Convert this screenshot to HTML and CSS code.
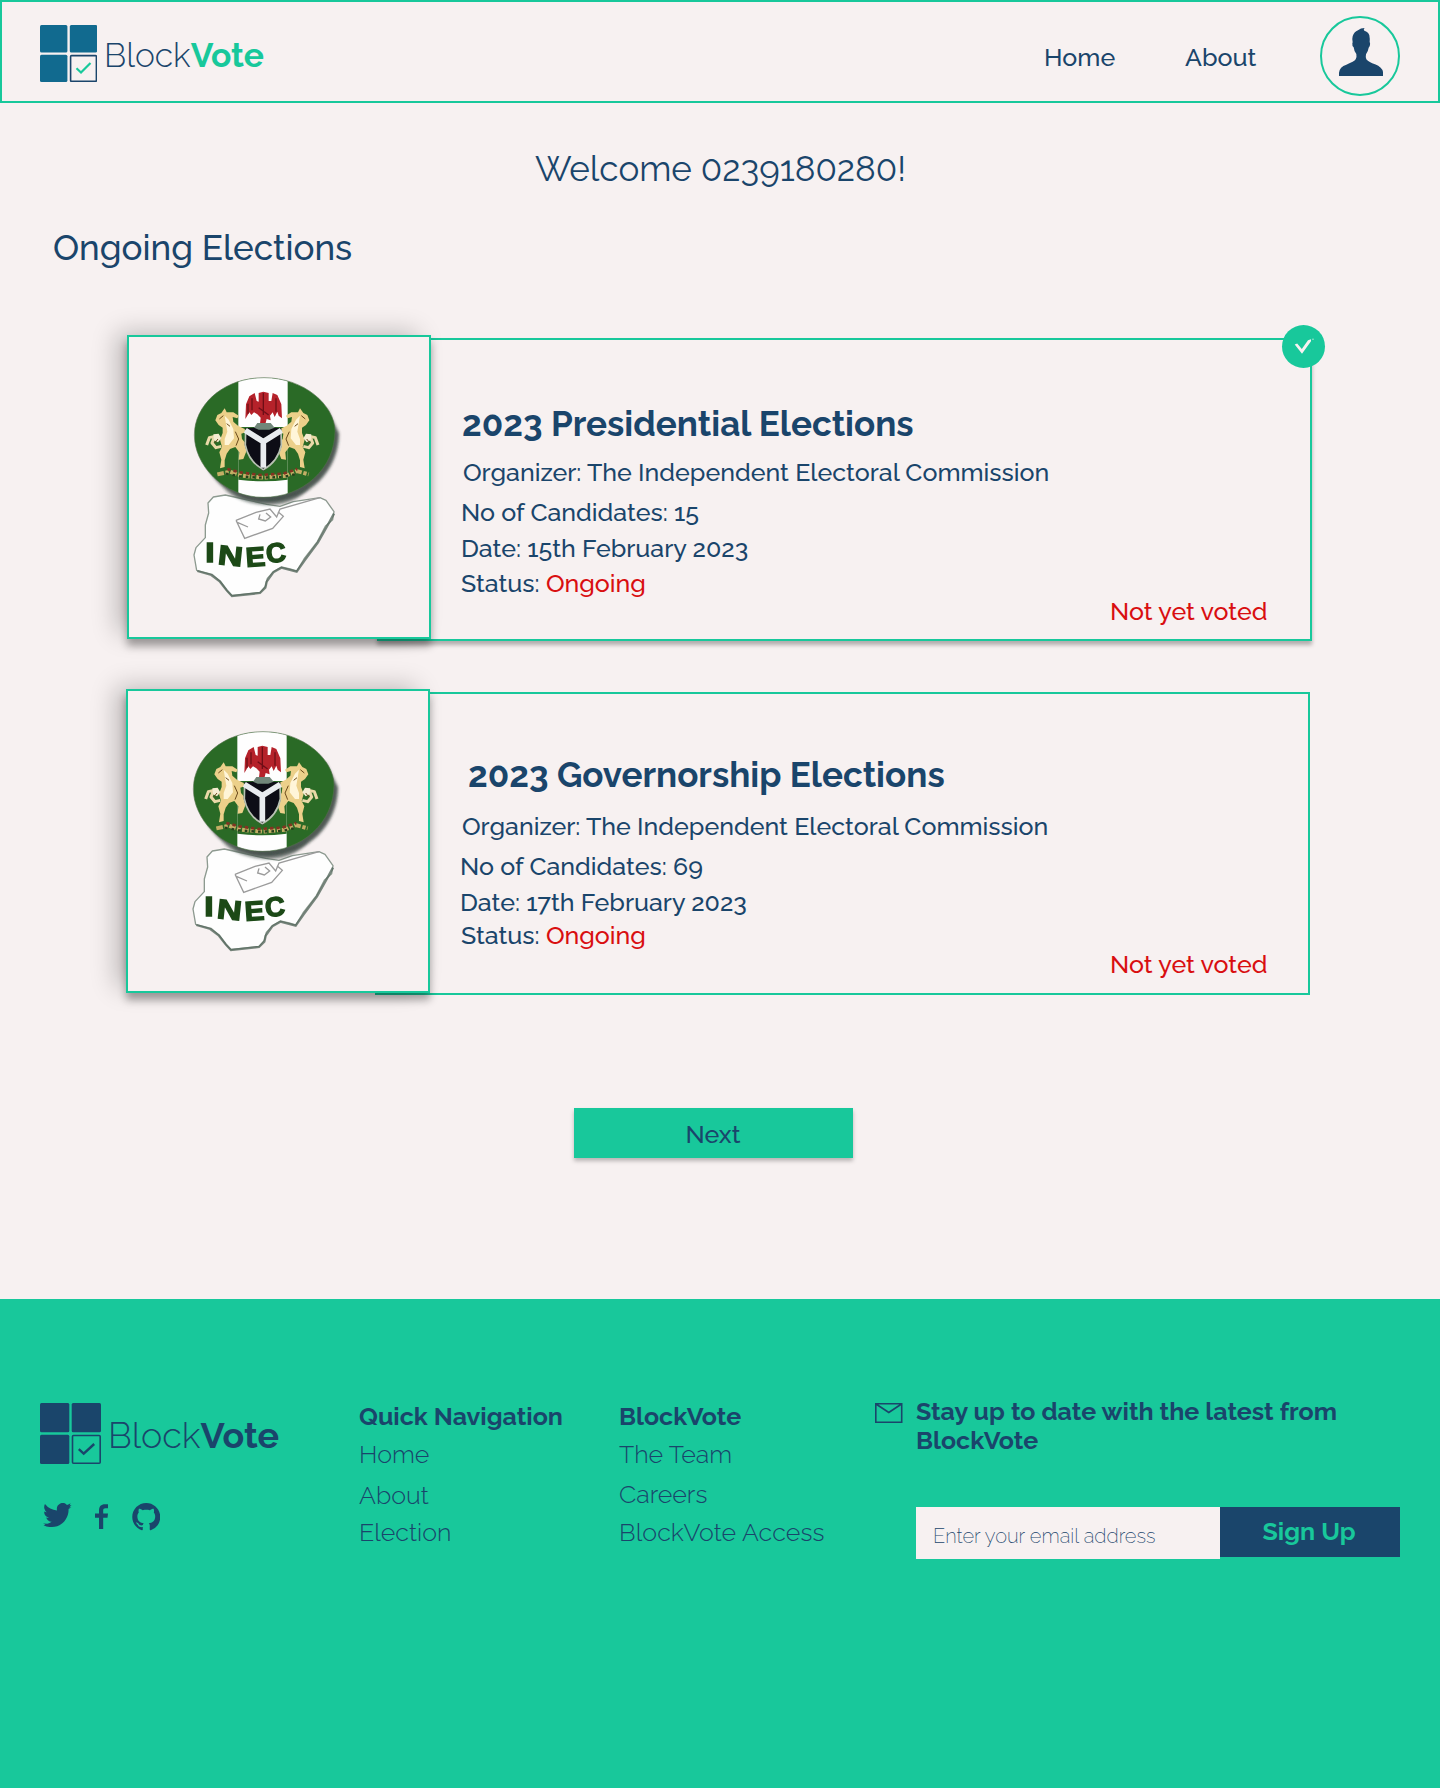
FILE: index.html
```html
<!DOCTYPE html>
<html lang="en">
<head>
<meta charset="utf-8">
<title>BlockVote</title>
<link rel="stylesheet" href="styles.css">
</head>
<body>
<svg class="defs" width="0" height="0" aria-hidden="true">
  <defs>
    <filter id="soft" x="-20%" y="-20%" width="140%" height="140%"><feGaussianBlur stdDeviation="5"/></filter>
    <filter id="print" x="-5%" y="-5%" width="110%" height="110%"><feGaussianBlur stdDeviation="1.6"/></filter>
    <clipPath id="oval"><path d="M43 210 C43 120 130 38 252 38 C372 38 464 120 465 198 C465 310 370 397 250 397 C130 397 43 300 43 210Z"/></clipPath>
    <g id="horse">
      <path fill="#ecd08a" d="M106 166 L112 150 L124 144 L134 130 L140 142 L160 142 L176 152 L172 160 L158 156 L160 170 L174 182 L194 192 L196 202 L184 206 L186 222 L198 236 L198 262 L190 282 L176 284 L178 262 L166 246 L150 252 L140 266 L134 286 L134 306 L120 310 L124 284 L118 262 L126 246 L120 224 L128 204 L128 188 L116 180Z"/>
      <path fill="#fff5d8" d="M134 152 L146 164 L160 192 L162 220 L146 240 L134 240 L134 222 L142 200Z"/>
      <path fill="none" stroke="#ead9a8" stroke-width="9" stroke-linejoin="round" d="M124 244 L108 248 L96 234 L104 214 L88 218 L80 240"/>
      <path fill="#f5ecd2" d="M100 208 L116 206 L124 220 L114 232 L102 226Z"/>
      <path fill="none" stroke="#6b4a1c" stroke-width="3" d="M118 162 L130 152 M166 200 L176 222 L168 242 M104 234 L114 222 M140 176 L150 184"/>
    </g>
    <symbol id="emblem" viewBox="0 0 510 720">
      <g filter="url(#print)">
        <path fill="#26352f" opacity=".8" filter="url(#soft)" d="M70 270 C90 350 160 411 260 412 C390 408 476 318 477 205 L440 130 L300 380Z"/>
        <path fill="#fefefe" stroke="#8d9a90" stroke-width="4" stroke-linejoin="round" d="M84 414 L100 396 L136 390 L190 402 L260 418 L300 424 L340 410 L420 398 L438 406 L462 440 L458 464 L436 484 L412 530 L372 582 L350 618 L330 612 L304 606 L280 620 L262 640 L256 664 L240 682 L156 692 L142 678 L120 648 L96 628 L50 616 L42 570 L48 548 L76 518 L76 480 L86 444Z"/>
        <path fill="none" stroke="#56695e" stroke-width="7" opacity=".8" d="M462 446 L440 486 L414 532 L374 586 L350 620 L304 608 L280 622 L260 650 L256 668 L240 684 L156 693 L140 676 L120 650 L94 630 L52 618"/>
        <path fill="none" stroke="#9b9b9b" stroke-width="4" d="M168 466 L228 442 L270 432 L290 456 L300 432 L420 398 M168 466 L194 520 L278 490 L310 454 L294 440 M240 448 L236 462 L256 468 L272 456 L258 444 M172 472 L204 486"/>
        <path fill="#30403a" opacity=".6" filter="url(#soft)" d="M130 370 Q190 404 256 404 Q330 400 390 366 Q340 424 258 420 Q180 416 130 370Z"/>
        <g clip-path="url(#oval)">
          <rect width="510" height="410" fill="#2c6b25"/>
          <rect x="175" y="36" width="148" height="366" fill="#fefefe"/>
          <path fill="#2c6b25" d="M175 186 H323 V344 Q250 354 175 344Z"/>
        </g>
        <path fill="none" stroke="#52704c" stroke-width="3" opacity=".6" d="M43 210 C43 120 130 38 252 38 C372 38 464 120 465 198 C465 310 370 397 250 397 C130 397 43 300 43 210Z"/>
        <path fill="#b5202a" d="M196 162 L198 118 L208 94 L224 84 L230 108 L236 110 L236 84 L250 80 L266 84 L266 108 L274 108 L278 84 L292 90 L304 118 L306 160 L296 152 L292 140 L284 156 L278 142 L270 152 L272 166 L260 162 L256 178 L240 176 L242 158 L232 148 L222 142 L214 150 L208 142Z"/>
        <path fill="none" stroke="#6e1018" stroke-width="4" d="M250 84 V150 M216 100 V136 M288 100 V140 M204 116 V146 M236 128 L266 150"/>
        <use href="#horse"/>
        <use href="#horse" transform="matrix(-1 0 0 1 494 0)"/>
        <path fill="#0b0d12" d="M196 190 L250 186 L304 190 L306 240 Q294 290 250 318 Q206 290 194 240Z"/>
        <path fill="none" stroke="#b9c2b4" stroke-width="5" d="M197 194 L196 240 Q206 290 250 314 Q294 290 304 240 L303 194"/>
        <path fill="none" stroke="#e9ecef" stroke-width="17" d="M196 196 L250 230 L304 196 M250 226 V308"/>
        <path fill="#71877a" d="M222 188 L232 174 L272 174 L284 188 L268 194 L236 194Z"/>
        <path fill="none" stroke="#c4ae66" stroke-width="12" stroke-dasharray="20 5 10 5" d="M112 328 L150 320 L186 332 L250 338 L318 332 L350 318 L386 328"/>
        <path fill="none" stroke="#833321" stroke-width="8" stroke-dasharray="10 9" d="M142 312 L180 322 L240 330 L310 326 L352 312"/>
        <path fill="none" stroke="#27401c" stroke-width="7" stroke-dasharray="8 12" d="M138 326 L180 334 L240 338 L310 336 L352 326"/>
        <g class="inec" font-size="82">
          <text transform="translate(76 591)" textLength="28" lengthAdjust="spacingAndGlyphs">I</text>
          <text transform="translate(112 597) rotate(6)" textLength="74" lengthAdjust="spacingAndGlyphs">N</text>
          <text transform="translate(199 606) rotate(-4)" textLength="59" lengthAdjust="spacingAndGlyphs">E</text>
          <text transform="translate(260 594) rotate(-5)" textLength="60" lengthAdjust="spacingAndGlyphs">C</text>
        </g>
      </g>
    </symbol>
  </defs>
</svg>

<header class="topbar">
  <a class="logo">
    <svg class="logo-mark" viewBox="0 0 57 57">
      <g fill="#116a8f"><rect width="27.4" height="27.4" rx="1.5"/><rect x="29.8" width="27.4" height="27.4" rx="1.5"/><rect y="29.8" width="27.4" height="27.2" rx="1.5"/></g>
      <rect x="30.6" y="30.6" width="25.8" height="25.8" rx="1" fill="none" stroke="#1a456b" stroke-width="1.6"/>
      <path d="M36.5 43.3 L41 47.5 L50.5 38" fill="none" stroke="#18c99b" stroke-width="2.2"/>
    </svg>
    <span class="logo-text"><span class="thin">Block</span><b>Vote</b></span>
  </a>
  <nav class="nav">
    <a>Home</a>
    <a>About</a>
    <span class="avatar">
      <svg width="44" height="48" viewBox="1017 84 132 144"><path fill="#1a456b" d="M1017 228v-10q2-18 22-24q24-9 28-16q4-6 2-16q-7-9-8-20q-5-4-4-12l1-3q-2-12 0-18q4-13 16-18q8-7 20-7q-5 4-1 8q12 3 15 14q2 10 1 20q2 3 1 9q-1 5-4 8q-2 12-8 20q-2 10 1 15q8 9 26 15q22 9 24 23v12z"/></svg>
    </span>
  </nav>
</header>

<main>
  <h1 class="welcome">Welcome 0239180280!</h1>
  <h2 class="section-title">Ongoing Elections</h2>

  <section class="elections">
    <article class="card card-selected">
      <div class="thumb"><svg class="emblem"><use href="#emblem"/></svg></div>
      <div class="details">
        <h3 class="pres">2023 Presidential Elections</h3>
        <p class="org">Organizer: The Independent Electoral Commission</p>
        <p class="count">No of Candidates: 15</p>
        <p class="date">Date: 15th February 2023</p>
        <p class="status">Status: <em>Ongoing</em></p>
        <p class="vote">Not yet voted</p>
        <span class="badge">
          <svg width="20" height="18" viewBox="0 0 20 18"><path fill="#f7f1f1" d="M0.7 6.4L3.2 5.4L7.8 11L14 2.2L17 1.2V3.2L8 15.8Z"/><circle cx="19" cy="1.2" r=".6" fill="#f7f1f1"/></svg>
        </span>
      </div>
    </article>

    <article class="card card-plain">
      <div class="thumb"><svg class="emblem"><use href="#emblem"/></svg></div>
      <div class="details">
        <h3 class="gov">2023 Governorship Elections</h3>
        <p class="org">Organizer: The Independent Electoral Commission</p>
        <p class="count">No of Candidates: 69</p>
        <p class="date">Date: 17th February 2023</p>
        <p class="status">Status: <em>Ongoing</em></p>
        <p class="vote">Not yet voted</p>
      </div>
    </article>
  </section>

  <button class="next">Next</button>
</main>

<footer class="footer">
  <div class="brand">
    <a class="logo logo-footer">
      <svg class="logo-mark" viewBox="0 0 61 61">
        <g fill="#1a456b"><rect width="29.3" height="29.3" rx="1.5"/><rect x="31.7" width="29.3" height="29.3" rx="1.5"/><rect y="31.7" width="29.3" height="29.3" rx="1.5"/></g>
        <rect x="32.5" y="32.5" width="27.7" height="27.7" rx="1" fill="none" stroke="#1a456b" stroke-width="1.6"/>
        <path d="M38.8 46.2 L43.7 50.6 L54.2 41" fill="none" stroke="#1a456b" stroke-width="2.4"/>
      </svg>
      <span class="logo-text"><span class="thin">Block</span><b>Vote</b></span>
    </a>
    <div class="social">
      <svg class="tw" width="28.5" height="24" viewBox="0 2 16 13" preserveAspectRatio="none"><path d="M5.026 15c6.038 0 9.341-5.003 9.341-9.334 0-.14 0-.282-.006-.422L15.9 4.3L14.8 4.4L16 3.1L14.9 3.4L15.5 2.2A6.533 6.533 0 0 1 13.471 3.036A3.286 3.286 0 0 0 7.875 6.03a9.325 9.325 0 0 1-6.767-3.429 3.289 3.289 0 0 0 1.018 4.382A3.323 3.323 0 0 1 .64 6.575v.045a3.288 3.288 0 0 0 2.632 3.218 3.203 3.203 0 0 1-.865.115 3.23 3.23 0 0 1-.614-.057 3.283 3.283 0 0 0 3.067 2.277A6.588 6.588 0 0 1 2.4 13.2L0 13.1L1.4 13.7L.3 14.1A9.344 9.344 0 0 0 5.026 15z"/></svg>
      <svg class="fb" width="13" height="25" viewBox="0 0 13 25"><path d="M4 25V13.8H0V9.5H4V6.5C4 2.3 6 .2 10 .2H13V4.3H10.5C8.8 4.3 8.2 5 8.2 6.6V9.5H13L12.5 13.8H8.2V25Z"/></svg>
      <svg class="gh" width="28.5" height="28" viewBox="0 0 16 16"><path d="M8 0C3.58 0 0 3.58 0 8c0 3.54 2.29 6.53 5.47 7.59.4.07.55-.17.55-.38 0-.19-.01-.82-.01-1.49-2.01.37-2.53-.49-2.69-.94-.09-.23-.48-.94-.82-1.13-.28-.15-.68-.52-.01-.53.63-.01 1.08.58 1.23.82.72 1.21 1.87.87 2.33.66.07-.52.28-.87.51-1.07-1.78-.2-3.64-.89-3.64-3.95 0-.87.31-1.59.82-2.15-.08-.2-.36-1.02.08-2.12 0 0 .67-.21 2.2.82.64-.18 1.32-.27 2-.27.68 0 1.36.09 2 .27 1.53-1.04 2.2-.82 2.2-.82.44 1.1.16 1.92.08 2.12.51.56.82 1.27.82 2.15 0 3.07-1.87 3.75-3.65 3.95.29.25.54.73.54 1.48 0 1.07-.01 1.93-.01 2.2 0 .21.15.46.55.38A8.012 8.012 0 0 0 16 8c0-4.42-3.58-8-8-8z"/></svg>
    </div>
  </div>
  <div class="links links-nav">
    <h4>Quick Navigation</h4>
    <a>Home</a>
    <a>About</a>
    <a>Election</a>
  </div>
  <div class="links links-company">
    <h4>BlockVote</h4>
    <a>The Team</a>
    <a>Careers</a>
    <a>BlockVote Access</a>
  </div>
  <div class="news">
    <svg class="mail" width="28" height="20" viewBox="0 0 28 20"><path fill="none" stroke="#1a456b" stroke-width="1.6" d="M.8 .8H26.7V19.2H.8ZM1 1L13.8 9.5L26.5 1"/></svg>
    <div class="news-main">
      <p class="news-title">Stay up to date with the latest from<br><span>BlockVote</span></p>
      <form class="signup">
        <input type="text" placeholder="Enter your email address">
        <button type="button">Sign Up</button>
      </form>
    </div>
  </div>
</footer>
</body>
</html>
```

FILE: styles.css
```css
:root {
  --navy: #1a456b;
  --green: #18c89b;
  --paper: #f7f1f1;
  --red: #d90e10;
}

* { box-sizing: border-box; }

body {
  margin: 0;
  min-height: 1788px;
  display: flex;
  flex-direction: column;
  background: var(--paper);
  color: var(--navy);
  font: 500 25px/30px Raleway, Lato, sans-serif;
}

h1, h2, h3, h4, p { margin: 0; white-space: nowrap; }
.defs { position: absolute; }

/* header */
.topbar {
  height: 103px;
  border: 2px solid var(--green);
  padding: 0 38px;
  display: flex;
  justify-content: space-between;
}
.logo { display: flex; align-items: flex-start; }
.topbar .logo { padding-top: 23px; }
.logo-mark { width: 57px; height: 57px; flex: none; }
.logo-text {
  margin: 10px 0 0 7px;
  font-size: 33.6px;
  line-height: 41px;
  white-space: nowrap;
}
.logo-text .thin { font-weight: 300; }
.logo-text b { font-weight: 700; color: var(--green); }
.nav { display: flex; font-weight: 500; }
.nav a { width: 141px; padding-top: 40px; }
.nav a + a { width: 135px; }
.avatar {
  width: 80px;
  height: 80px;
  margin-top: 14px;
  border: 2px solid var(--green);
  border-radius: 50%;
  padding: 10px 0 0 17px;
}
.avatar svg { display: block; }

/* main */
main { display: flex; flex-direction: column; height: 1196px; }
.welcome {
  margin: 45px 0 0 535px;
  font-size: 35px;
  line-height: 42px;
  font-weight: 400;
}
.section-title {
  margin: 37px 0 0 53px;
  font-size: 35px;
  line-height: 42px;
  font-weight: 500;
}
.elections {
  margin-top: 66px;
  display: flex;
  flex-direction: column;
  gap: 48px;
}
.card { display: flex; height: 306px; margin-left: 127px; }
.card-plain { margin-left: 126px; }
.thumb {
  position: relative;
  z-index: 1;
  width: 304px;
  height: 304px;
  flex: none;
  border: 2px solid var(--green);
  background: var(--paper);
  padding: 28px 0 0 51px;
  box-shadow: 0 7px 8px rgba(0, 0, 0, .32), -12px -4px 24px -2px rgba(0, 0, 0, .24);
}
.emblem { display: block; width: 170px; height: 240px; }
.inec text { font-family: "Liberation Sans", sans-serif; font-weight: 700; fill: #1c4a18; stroke: #1c4a18; stroke-width: 4; }
.details {
  position: relative;
  width: 935px;
  height: 303px;
  margin: 3px 0 0 -54px;
  border: 2px solid var(--green);
  padding: 63px 0 0 82px;
  display: flex;
  flex-direction: column;
  align-items: flex-start;
}
.card-selected .details { box-shadow: 0 4px 4px rgba(0, 0, 0, .28); }
.card-plain .details { margin-left: -55px; padding: 60px 0 0 83px; }
.details h3 { font-size: 35px; line-height: 42px; font-weight: 700; }
.pres { margin-left: 1px; }
.gov { margin-left: 8px; }
.org { margin: 12px 0 0 2px; }
.count { margin-top: 10px; }
.date { margin-top: 6px; }
.status { margin-top: 5px; }
.status em { font-style: normal; color: var(--red); }
.vote { margin: -2px 0 0 649px; color: var(--red); }
.card-plain .org { margin: 15px 0 0 2px; }
.card-plain .status { margin: 3px 0 0 1px; }
.card-plain .vote { margin: -1px 0 0 650px; }
.badge {
  position: absolute;
  top: -15px;
  right: -15px;
  width: 43px;
  height: 43px;
  border-radius: 50%;
  background: var(--green);
}
.badge svg { display: block; margin: 13px 0 0 12px; }

.next {
  width: 279px;
  height: 50px;
  margin: 113px 0 0 574px;
  border: 0;
  padding: 2px 1px 0 0;
  background: var(--green);
  color: var(--navy);
  font: inherit;
  box-shadow: 0 3px 4px rgba(0, 0, 0, .25);
}

/* footer */
.footer {
  flex: 1;
  background: var(--green);
  padding: 104px 40px 0;
  display: flex;
}
.brand { width: 319px; }
.logo-footer .logo-mark { width: 61px; height: 61px; }
.logo-footer .logo-text { margin: 11px 0 0 7px; font-size: 35.9px; line-height: 43px; }
.logo-footer .logo-text b { color: var(--navy); }
.social { display: flex; margin: 39px 0 0 2px; fill: var(--navy); }
.tw { margin-left: 1px; }
.fb { margin: 1px 0 0 23px; }
.gh { margin-left: 24px; }
.links { display: flex; flex-direction: column; font-weight: 300; white-space: nowrap; }
.links h4 { font-size: 25px; font-weight: 700; }
.links-nav { width: 260px; margin-top: -2px; }
.links-company { width: 256px; margin-top: -2px; }
.links a:nth-child(2) { margin-top: 8px; }
.links a:nth-child(3) { margin-top: 11px; }
.links a:nth-child(4) { margin-top: 7px; }
.links-company a:nth-child(3) { margin-top: 10px; }
.links-company a:nth-child(4) { margin-top: 8px; letter-spacing: .1px; }
.news { display: flex; }
.mail { margin-right: 13px; flex: none; }
.news-title { margin-top: -6px; font-weight: 700; line-height: 29px; }
.signup { display: flex; align-items: flex-start; margin-top: 52px; }
.signup input {
  width: 304px;
  height: 52px;
  border: 0;
  padding: 6px 0 0 17px;
  background: var(--paper);
  font: 200 20px/24px Raleway, Lato, sans-serif;
}
.signup input::placeholder { color: var(--navy); opacity: 1; }
.signup button {
  width: 180px;
  height: 50px;
  border: 0;
  padding: 0 2px 2px 0;
  background: var(--navy);
  color: var(--green);
  font: 700 25px/30px Raleway, Lato, sans-serif;
}
```
